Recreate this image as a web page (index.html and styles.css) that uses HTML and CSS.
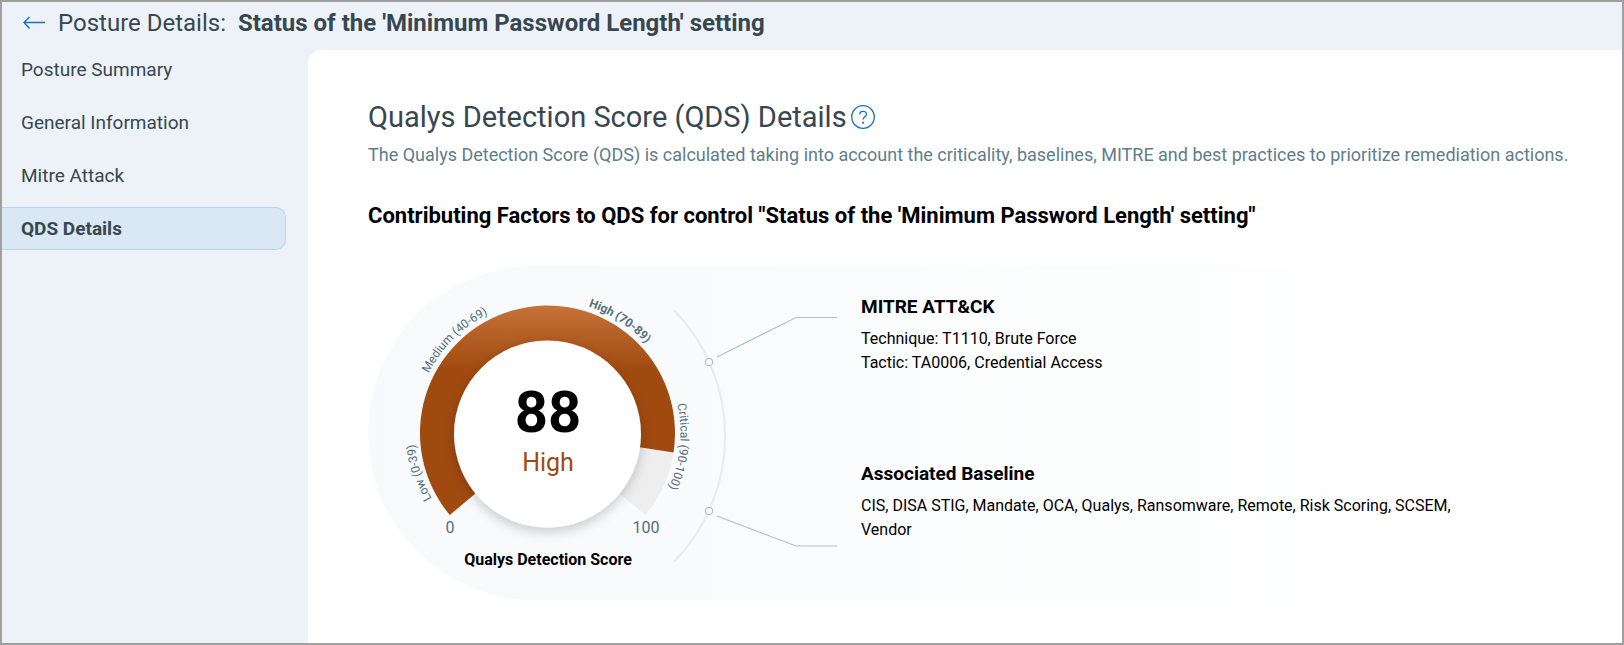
FILE: index.html
```html
<!DOCTYPE html>
<html lang="en">
<head>
    <meta charset="UTF-8">
    <meta name="viewport" content="width=device-width, initial-scale=1.0">
    <title>Posture Details</title>
    <link rel="stylesheet" href="styles.css">
</head>
<body>
    <header class="page-header">
        <a href="#" class="back-link" aria-label="Back">
            <svg width="22" height="14" viewBox="0 0 22 14" fill="none" stroke="#1b6ec2" stroke-width="1.4">
                <path d="M22 6.500H1M6.500 1L1 6.500l5.500 6"/>
            </svg>
        </a>
        <h1 class="page-title">Posture Details: <strong>Status of the 'Minimum Password Length' setting</strong></h1>
    </header>

    <div class="layout">
        <nav class="side-nav">
            <a href="#" class="nav-item">Posture Summary</a>
            <a href="#" class="nav-item">General Information</a>
            <a href="#" class="nav-item">Mitre Attack</a>
            <a href="#" class="nav-item active">QDS Details</a>
        </nav>

        <main class="content">
            <div class="title-row">
                <h2 class="section-title">Qualys Detection Score (QDS) Details</h2>
                <button type="button" class="help-button" aria-label="Help">
                    <svg width="24" height="24" viewBox="0 0 24 24" fill="none" stroke="#1b6ec2" stroke-width="1.3">
                        <circle cx="12" cy="12" r="11.3"/>
                        <path d="M8.700 9.600c0-2.200 1.500-3.300 3.400-3.300s3.300 1.100 3.300 2.900c0 2.600-3.300 2.600-3.300 5.400"/>
                        <path d="M12.1 16.700v2" stroke-width="1.7"/>
                    </svg>
                </button>
            </div>
            <p class="section-text">The Qualys Detection Score (QDS) is calculated taking into account the criticality, baselines, MITRE and best practices to prioritize remediation actions.</p>

            <h3 class="factors-title">Contributing Factors to QDS for control "Status of the 'Minimum Password Length' setting"</h3>

            <section class="score-panel">
                <svg class="gauge" width="470" height="334" viewBox="0 0 470 334" role="img" aria-label="Qualys Detection Score 88, High">
                    <defs>
                        <linearGradient id="scoreFill" gradientUnits="userSpaceOnUse" x1="0" y1="39" x2="0" y2="104">
                            <stop offset="0" stop-color="#c77238"/>
                            <stop offset="1" stop-color="#a04a10"/>
                        </linearGradient>
                        <filter id="dialShadow" x="-20%" y="-20%" width="140%" height="140%">
                            <feDropShadow dx="0" dy="4" stdDeviation="6" flood-color="#000" flood-opacity="0.2"/>
                        </filter>
                        <!-- label circle, clockwise from the bottom -->
                        <path id="labelPath" d="M179.5 300a133 133 0 0 1 0-266a133 133 0 0 1 0 266"/>
                    </defs>

                    <!-- track and value -->
                    <path fill="#eeeeee" d="M179.5 167L305.5 186.5A127.5 127.5 0 0 1 277.2 249z"/>
                    <path fill="url(#scoreFill)" d="M179.5 167L81.8 249A127.5 127.5 0 1 1 305.5 186.5z"/>
                    <circle cx="179.5" cy="168" r="93.5" fill="#fff" filter="url(#dialShadow)"/>

                    <text class="range-label"><textPath href="#labelPath" startOffset="16.8%">Low (0-39)</textPath></text>
                    <text class="range-label"><textPath href="#labelPath" startOffset="32.4%">Medium (40-69)</textPath></text>
                    <text class="range-label current"><textPath href="#labelPath" startOffset="55%">High (70-89)</textPath></text>
                    <text class="range-label"><textPath href="#labelPath" startOffset="71.5%">Critical (90-100)</textPath></text>

                    <text class="score-value" x="180" y="166">88</text>
                    <text class="score-level" x="180" y="205">High</text>
                    <text class="scale-label" x="82" y="267">0</text>
                    <text class="scale-label" x="278" y="267">100</text>
                    <text class="gauge-caption" x="180" y="299">Qualys Detection Score</text>

                    <!-- connectors -->
                    <path fill="none" stroke="#e6ebee" stroke-width="2" d="M306 44A181 181 0 0 1 306 296"/>
                    <g fill="#fafbfb" stroke="#b4c0ca" stroke-width="1.2">
                        <circle cx="341" cy="96" r="3.7"/>
                        <circle cx="341" cy="245" r="3.7"/>
                    </g>
                    <path fill="none" stroke="#b4c0ca" stroke-width="1.2" d="M349 91L428 51.5H469M349 250L428 280H469"/>
                </svg>

                <div class="factors">
                    <div class="factor">
                        <h4>MITRE ATT&amp;CK</h4>
                        <p>Technique: T1110, Brute Force</p>
                        <p>Tactic: TA0006, Credential Access</p>
                    </div>
                    <div class="factor">
                        <h4>Associated Baseline</h4>
                        <p>CIS, DISA STIG, Mandate, OCA, Qualys, Ransomware, Remote, Risk Scoring, SCSEM, Vendor</p>
                    </div>
                </div>
            </section>
        </main>
    </div>
</body>
</html>
```

FILE: styles.css
```css
* {
    box-sizing: border-box;
}

body {
    margin: 0;
    min-height: 100vh;
    display: flex;
    flex-direction: column;
    font-family: Roboto, "Liberation Sans", sans-serif;
    font-size: 16px;
    color: #000;
    background-color: #edf2f9;
    border: 2px solid #a0a0a0;
}

h1, h2, h3, h4, p {
    margin: 0;
}

.page-header {
    display: flex;
    align-items: center;
    gap: 13px;
    height: 46px;
    padding: 0 21px 4px;
}

.back-link {
    display: flex;
}

.page-title {
    font-size: 24px;
    font-weight: 400;
    line-height: 32px;
    color: #37474f;
}

.page-title strong {
    margin-left: 6px;
}

.layout {
    flex: 1;
    display: flex;
}

.side-nav {
    width: 306px;
    flex-shrink: 0;
    display: flex;
    flex-direction: column;
    gap: 10px;
    padding-right: 22px;
}

.nav-item {
    height: 43px;
    padding: 0 19px;
    border: 1px solid transparent;
    border-left: none;
    border-radius: 0 10px 10px 0;
    font-size: 19px;
    line-height: 41px;
    color: #37474f;
    text-decoration: none;
}

.nav-item.active {
    font-weight: 700;
    background-color: #dae7f4;
    border-color: #bfd6ea;
}

.content {
    flex: 1;
    margin-top: 2px;
    padding: 48px 40px 40px 60px;
    background-color: #fff;
    border-top-left-radius: 14px;
}

.title-row {
    display: flex;
    align-items: center;
    gap: 4px;
}

.section-title {
    font-size: 29px;
    font-weight: 400;
    line-height: 38px;
    color: #37474f;
}

.help-button {
    display: flex;
    padding: 0;
    border: none;
    background: none;
    cursor: pointer;
}

.section-text {
    font-size: 18px;
    line-height: 38px;
    color: #607d8b;
}

.factors-title {
    margin-top: 12px;
    font-size: 22px;
    line-height: 60px;
}

.score-panel {
    display: flex;
    gap: 23px;
    margin-top: 20px;
    border-radius: 167px 0 0 167px;
    background: linear-gradient(to right, #f7f9fa, #fff 90%);
}

.gauge {
    flex-shrink: 0;
}

.gauge text {
    text-anchor: middle;
}

.gauge .range-label {
    font-size: 12px;
    fill: #546e7a;
    text-anchor: start;
}

.gauge .range-label.current {
    font-weight: 700;
}

.gauge .score-value {
    font-size: 58px;
    font-weight: 700;
}

.gauge .score-level {
    font-size: 25px;
    fill: #a04a10;
}

.gauge .scale-label {
    font-size: 16px;
    fill: #546e7a;
}

.gauge .gauge-caption {
    font-size: 16px;
    font-weight: 700;
}

.factors {
    display: grid;
    grid-template-rows: 1fr 1fr;
    max-width: 600px;
}

.factor {
    padding-top: 27px;
}

.factor h4 {
    margin-bottom: 6px;
    font-size: 19px;
    line-height: 28px;
}

.factor p {
    font-size: 16px;
    line-height: 24px;
}
```
